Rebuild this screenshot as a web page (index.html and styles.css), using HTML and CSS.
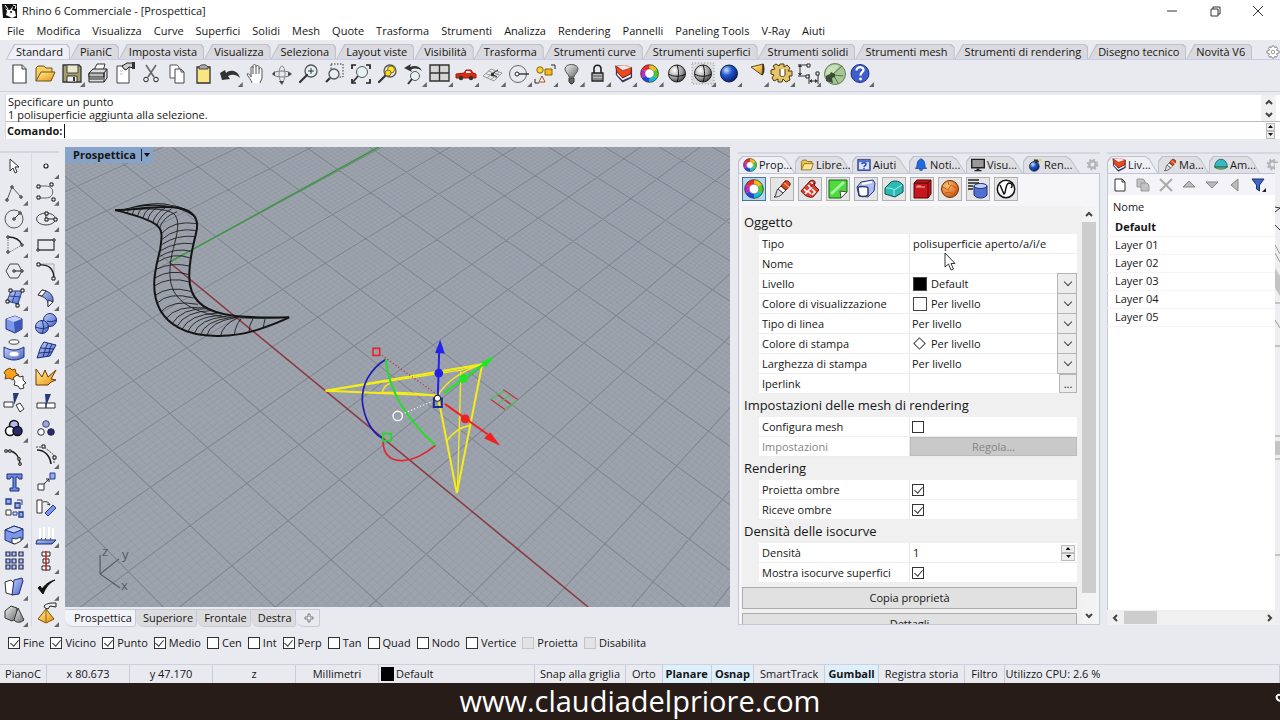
FILE: index.html
```html
<!DOCTYPE html>
<html lang="it">
<head>
<meta charset="utf-8">
<title>Rhino 6 Commerciale - [Prospettica]</title>
<link rel="stylesheet" href="styles.css">
</head>
<body>
<svg class="defs" aria-hidden="true">
  <defs>
    <linearGradient id="gBlue" x1="0" y1="0" x2="1" y2="1"><stop offset="0" stop-color="#c3d1f8"/><stop offset="1" stop-color="#4564c8"/></linearGradient>
    <linearGradient id="gGold" x1="0" y1="0" x2="1" y2="1"><stop offset="0" stop-color="#fff3a0"/><stop offset="1" stop-color="#e98f0c"/></linearGradient>
    <linearGradient id="gGrey" x1="0" y1="0" x2="1" y2="1"><stop offset="0" stop-color="#f4f4f4"/><stop offset="1" stop-color="#6a6a6a"/></linearGradient>
    <radialGradient id="gBall" cx=".35" cy=".3" r=".8"><stop offset="0" stop-color="#fff"/><stop offset=".6" stop-color="#999"/><stop offset="1" stop-color="#222"/></radialGradient>
    <radialGradient id="gBlueBall" cx=".35" cy=".3" r=".8"><stop offset="0" stop-color="#cfe4ff"/><stop offset=".4" stop-color="#2257cf"/><stop offset="1" stop-color="#04145c"/></radialGradient>
    <radialGradient id="gOrange" cx=".35" cy=".3" r=".8"><stop offset="0" stop-color="#ffc47a"/><stop offset="1" stop-color="#c84b00"/></radialGradient>
    <symbol id="wheel" viewBox="0 0 20 20">
      <g fill="none" stroke-width="4.500">
        <path d="M10 3A7 7 0 0 1 16.100 6.500" stroke="#f0c010"/><path d="M16.100 6.500A7 7 0 0 1 16.100 13.500" stroke="#4fd020"/>
        <path d="M16.100 13.500A7 7 0 0 1 10 17" stroke="#10c0c8"/><path d="M10 17A7 7 0 0 1 3.900 13.500" stroke="#2048e0"/>
        <path d="M3.900 13.500A7 7 0 0 1 3.900 6.500" stroke="#c028c8"/><path d="M3.900 6.500A7 7 0 0 1 10 3" stroke="#f02828"/>
      </g>
      <circle cx="10" cy="10" r="9.300" fill="none" stroke="#333" stroke-width=".8"/><circle cx="10" cy="10" r="4.800" fill="#fff" stroke="#555" stroke-width=".6"/>
    </symbol>
    <symbol id="layers" viewBox="0 0 20 20">
      <path d="M2 2v9l7 8 10-5V3z" fill="#1d2d6e" stroke="#222" stroke-width=".8"/><path d="M3 8l6 7 9-5v3l-9 4-6-6z" fill="#f6f6f6"/><path d="M1 1l8 5 10-3-1 7-9 4-6-6z" fill="#ee4a1d" stroke="#7b1a08" stroke-width=".8"/><path d="M2 1l9-1 8 3-10 3z" fill="#fbe6df" stroke="#a34" stroke-width=".5"/>
    </symbol>
    <symbol id="gear" viewBox="0 0 16 16">
      <circle cx="8" cy="8" r="6" fill="none" stroke="currentColor" stroke-width="2.500" stroke-dasharray="2.400 2.310"/><circle cx="8" cy="8" r="4" fill="none" stroke="currentColor" stroke-width="3"/>
    </symbol>
    <symbol id="brush" viewBox="0 0 20 20">
      <path d="M2 18c3-1 1-5 4-8l5 4c-3 4-6 4-9 4z" fill="#ddd" stroke="#333"/><path d="M6 10l3-3 5 4-3 3z" fill="#fff" stroke="#444"/><path d="M9 7l4-5c3-1 6 2 5 4l-4 5z" fill="#e2481b" stroke="#54190a"/><path d="M12 4l5 4" stroke="#ff9a78" stroke-width="1.500"/>
    </symbol>
    <symbol id="lens" viewBox="0 0 26 26">
      <circle cx="16" cy="10" r="6" fill="#e7f1f4" stroke="#555" stroke-width="1.300"/><path d="M12 14l-7 7" stroke="#333" stroke-width="2.200" stroke-linecap="round"/>
    </symbol>
  </defs>
</svg>

<header class="titlebar">
  <svg class="app-icon" viewBox="0 0 16 16"><path d="M0 1h15v14H1z" fill="#111"/><path d="M1 2l4 6-1 4 6 3 4-2-1-5-3-1 1-4-3 4-4-1z" fill="#fff"/><path d="M11 2l3 1-1 3M3 2l3 4" stroke="#fff" fill="none"/><circle cx="9" cy="9" r="1" fill="#111"/></svg>
  <h1>Rhino 6 Commerciale - [Prospettica]</h1>
  <div class="window-buttons">
    <button aria-label="Riduci a icona"><svg viewBox="0 0 12 12"><path d="M1 6h10"/></svg></button>
    <button aria-label="Ripristina"><svg viewBox="0 0 12 12"><path d="M2 4h7v7H2zM4 4V2h7v7H9"/></svg></button>
    <button aria-label="Chiudi"><svg viewBox="0 0 12 12"><path d="M1 1l10 10M11 1L1 11"/></svg></button>
  </div>
</header>

<nav class="menu">
  <button>File</button><button>Modifica</button><button>Visualizza</button><button>Curve</button><button>Superfici</button><button>Solidi</button><button>Mesh</button><button>Quote</button><button>Trasforma</button><button>Strumenti</button><button>Analizza</button><button>Rendering</button><button>Pannelli</button><button>Paneling Tools</button><button>V-Ray</button><button>Aiuti</button>
</nav>

<section class="ribbon">
  <div class="ribbon-tabs">
    <button class="tab on">Standard</button><button class="tab">PianiC</button><button class="tab">Imposta vista</button><button class="tab">Visualizza</button><button class="tab">Seleziona</button><button class="tab">Layout viste</button><button class="tab">Visibilità</button><button class="tab">Trasforma</button><button class="tab">Strumenti curve</button><button class="tab">Strumenti superfici</button><button class="tab">Strumenti solidi</button><button class="tab">Strumenti mesh</button><button class="tab">Strumenti di rendering</button><button class="tab">Disegno tecnico</button><button class="tab">Novità V6</button>
    <button class="ribbon-gear" aria-label="Opzioni"><svg viewBox="0 0 16 16"><path d="M7 1h2l1 2 2-1 1 2-1 2 3 1v2l-3 1 1 2-1 2-2-1-1 2H7l-1-2-2 1-1-2 1-2-3-1V7l3-1-1-2 1-2 2 1z" fill="#fff" stroke="#777"/><circle cx="8" cy="8" r="2" fill="none" stroke="#888"/></svg></button>
  </div>
  <div class="toolbar">
    <button aria-label="Nuovo"><svg viewBox="0 0 26 26"><path d="M7 4h9l4 4v14H7z" fill="#fff" stroke="#444" stroke-width="1.200"/><path d="M16 4v4h4" fill="#ddd" stroke="#444"/></svg></button>
    <button aria-label="Apri"><svg viewBox="0 0 26 26"><path d="M4 20V7l2-2h6l2 2h6v4" fill="#f5cf5f" stroke="#6a5417"/><path d="M4 20l5-9h14l-4 9z" fill="url(#gGold)" stroke="#6a5417"/></svg></button>
    <button class="fly" aria-label="Salva"><svg viewBox="0 0 26 26"><path d="M4 4h16l2 2v15H4z" fill="#a4a068" stroke="#333" stroke-width="1.300"/><path d="M8 4h11v8H8z" fill="#e9e7d0" stroke="#444"/><path d="M8 15h10v6H8z" fill="#eee" stroke="#333"/><path d="M14 16h2v4h-2z" fill="#333"/></svg></button>
    <button aria-label="Stampa"><svg viewBox="0 0 26 26"><path d="M9 9l3-6h8l-2 7" fill="#fff" stroke="#333"/><path d="M4 12l4-4h14v9l-3 4H4z" fill="#ddd" stroke="#222"/><path d="M4 12h15v4H4zM4 18h14" fill="#bbb" stroke="#222"/><path d="M19 12l3-4M19 21v-9" stroke="#222"/></svg></button>
    <button aria-label="Proprietà documento"><svg viewBox="0 0 26 26"><path d="M6 5h12v17H6z" fill="#fff" stroke="#444"/><path d="M9 10h3M9 13h3" stroke="#bbb"/><path d="M11 5l5-3h7v5l-5-1-3 3-2-1z" fill="#ccc" stroke="#222"/><path d="M21 1h3v7h-3z" fill="#333"/></svg></button>
    <button aria-label="Taglia"><svg viewBox="0 0 26 26"><path d="M8 4l8 12M18 4l-8 12" stroke="#666" stroke-width="1.600"/><circle cx="8" cy="18.500" r="2.300" fill="none" stroke="#222"/><circle cx="18" cy="18.500" r="2.300" fill="none" stroke="#222"/></svg></button>
    <button aria-label="Copia"><svg viewBox="0 0 26 26"><path d="M6 4h7l2 2v11H6z" fill="#fff" stroke="#555"/><path d="M11 8h6l3 3v11h-9z" fill="#fff" stroke="#444"/><path d="M17 8v3h3" fill="none" stroke="#444"/></svg></button>
    <button aria-label="Incolla"><svg viewBox="0 0 26 26"><path d="M7 6h13v16H7z" fill="#f9e682" stroke="#333" stroke-width="1.300"/><path d="M9 6c1-3 8-3 9 0v2H9z" fill="#aaa" stroke="#444"/></svg></button>
    <button class="fly" aria-label="Annulla"><svg viewBox="0 0 26 26"><path d="M3 12l5-3 1 3c4-4 12-3 14 5-4-4-8-4-12-2l2 3-8 1z" fill="#333"/></svg></button>
    <button aria-label="Panoramica"><svg viewBox="0 0 26 26"><path d="M9 22c-1-4-4-6-5-9 2-1 3 1 4 3V7c0-2 2-2 2 0V5c0-2 3-2 3 0v1c0-2 3-2 3 0v2c0-2 3-2 3 1v8l-2 5" fill="#fff" stroke="#555"/><path d="M10 7v6M13 6v7M16 8v5" stroke="#555"/></svg></button>
    <button aria-label="Ruota vista"><svg viewBox="0 0 26 26"><ellipse cx="13" cy="13" rx="9" ry="3" fill="none" stroke="#777"/><ellipse cx="13" cy="13" rx="3" ry="8" fill="none" stroke="#888"/><path d="M3 13l3-3v5zM13 24l-3-4h5zM23 13l-4-2v4z" fill="#444"/></svg></button>
    <button aria-label="Zoom dinamico"><svg viewBox="0 0 26 26"><use href="#lens"/><path d="M13 10h6M16 7v6" stroke="#333"/></svg></button>
    <button aria-label="Zoom finestra"><svg viewBox="0 0 26 26"><path d="M9 3h12v13H9z" fill="none" stroke="#333" stroke-dasharray="1.500 1.500"/><circle cx="12" cy="13" r="5" fill="#e7f1f4" stroke="#555" stroke-width="1.300"/><path d="M8 17l-4 4" stroke="#333" stroke-width="2.200"/></svg></button>
    <button aria-label="Zoom estensioni"><svg viewBox="0 0 26 26"><path d="M4 8V4h4M18 4h4v4M22 18v4h-4M8 22H4v-4" fill="none" stroke="#222" stroke-width="1.700"/><circle cx="14" cy="11" r="5.500" fill="#e7f1f4" stroke="#555"/><path d="M10 15l-5 6" stroke="#333" stroke-width="1.800"/></svg></button>
    <button aria-label="Zoom selezione"><svg viewBox="0 0 26 26"><use href="#lens"/><circle cx="17" cy="8.500" r="3.500" fill="#fae63a" stroke="#876e00"/><circle cx="14" cy="12" r="3" fill="#f8d828" stroke="#876e00"/></svg></button>
    <button class="fly" aria-label="Vista precedente"><svg viewBox="0 0 26 26"><path d="M3 7l7-4-1 3c5-2 10-1 12 4-4-3-8-3-11-1l1 2z" fill="#333"/><circle cx="14" cy="15" r="4.500" fill="#e7f1f4" stroke="#555"/><path d="M11 18l-4 5" stroke="#333" stroke-width="2"/></svg></button>
    <button class="fly" aria-label="Quattro viste"><svg viewBox="0 0 26 26"><path d="M3 4h19v16H3zM12.500 4v16M3 12h19" fill="#d6d6d6" stroke="#333" stroke-width="1.400"/></svg></button>
    <button class="fly" aria-label="Auto"><svg viewBox="0 0 26 26"><path d="M3 13l8-1 2-3h5l2 3 3 1v4H3z" fill="#d92a16" stroke="#a31a0c"/><path d="M13 10h4l1 2h-5z" fill="#eee"/><circle cx="8" cy="17" r="2.200" fill="#333"/><circle cx="18" cy="17" r="2.200" fill="#333"/></svg></button>
    <button class="fly" aria-label="Piano di costruzione"><svg viewBox="0 0 26 26"><path d="M3 15l8-7 11 4-8 8zM6 12.500l11 4.500M8.500 10l11 4M7 17l8-7M11 18.500l8-7" fill="none" stroke="#999"/><path d="M12 13l5 3M12 13l6-4" stroke="#333"/><path d="M11 12h3v3h-3z" fill="#333"/></svg></button>
    <button class="fly" aria-label="Cerchio"><svg viewBox="0 0 26 26"><circle cx="12" cy="13" r="8.500" fill="none" stroke="#666"/><circle cx="11" cy="13" r="2" fill="#fff" stroke="#222"/><path d="M13 13h10" stroke="#222" stroke-width="1.300"/></svg></button>
    <button class="fly" aria-label="Seleziona"><svg viewBox="0 0 26 26"><circle cx="8" cy="9" r="3.200" fill="#fbd42d" stroke="#80640b"/><path d="M13 8h7v6h-7z" fill="#fbb71a" stroke="#80640b"/><path d="M10 15l3 6H7z" fill="#fff" stroke="#a74813"/><path d="M19 4h4v4M3 18v4h4" fill="none" stroke="#222"/></svg></button>
    <button class="fly" aria-label="Visibilità"><svg viewBox="0 0 26 26"><path d="M10 16c0-3-4-4-4-8 0-6 13-6 13 0 0 4-4 5-4 8z" fill="url(#gGrey)" stroke="#555"/><path d="M10 17h5v4l-2 2h-1l-2-2z" fill="#666" stroke="#333"/></svg></button>
    <button class="fly" aria-label="Blocca"><svg viewBox="0 0 26 26"><path d="M9 12V8c0-5 7-5 7 0v4" fill="none" stroke="#222" stroke-width="1.600"/><path d="M7 12h11v8H7z" fill="#bbb" stroke="#222" stroke-width="1.300"/><path d="M8 15h9M8 18h9" stroke="#555"/></svg></button>
    <button class="fly" aria-label="Livelli"><svg viewBox="0 0 26 26"><use href="#layers" x="3" y="4" width="19" height="18"/></svg></button>
    <button class="fly" aria-label="Colori"><svg viewBox="0 0 26 26"><use href="#wheel" x="3" y="3" width="19" height="19"/></svg></button>
    <button aria-label="Ombreggia"><svg viewBox="0 0 26 26"><circle cx="13" cy="12.500" r="8.500" fill="url(#gBall)" stroke="#222"/><path d="M4.500 13c5 3 12 3 17 0M13 4c2 5 2 12 0 17" fill="none" stroke="#111"/></svg></button>
    <button class="fly" aria-label="Ombreggia selezione"><svg viewBox="0 0 26 26"><path d="M2 2h22v21H2z" fill="#dcdce0" stroke="#bbb" stroke-width="2" stroke-dasharray="1 2"/><circle cx="13" cy="12.500" r="8.500" fill="url(#gBall)" stroke="#222"/><path d="M4.500 13c5 3 12 3 17 0M13 4c2 5 2 12 0 17" fill="none" stroke="#111"/></svg></button>
    <button class="fly" aria-label="Rendering"><svg viewBox="0 0 26 26"><circle cx="13" cy="12.500" r="8.500" fill="url(#gBlueBall)" stroke="#0a1a50"/></svg></button>
    <button class="fly" aria-label="Faretto"><svg viewBox="0 0 26 26"><path d="M8 6l12-3-1 11z" fill="url(#gGold)" stroke="#5b471a"/><path d="M19 14c2-2 2-7 1-11" fill="none" stroke="#333" stroke-width="1.500"/></svg></button>
    <button class="fly" aria-label="Opzioni"><svg viewBox="0 0 26 26"><path d="M11 3h4v3l3-2 3 3-2 3h4v5h-3l1 4-4 2-3-3-1 3h-4v-3l-4 2-2-3 2-3-3-1v-4l4-1-2-3 3-2 3 2z" fill="#e6c46a" stroke="#4b3608"/><path d="M11 8v6c0 2 5 2 5 0V8" fill="#fff" stroke="#4b3608"/></svg></button>
    <button class="fly" aria-label="Quote"><svg viewBox="0 0 26 26"><path d="M3 4h10M3 15h8M5 6v8M13 4v2M14 13v10M23 13v10M15 20h7" fill="none" stroke="#333"/><path d="M3 6l2-3 2 3zM3 12l2 3 2-3zM17 18l-3 2 3 2zM20 18l3 2-3 2z" fill="#333"/><path d="M11 14h3v3h-3zM12 3h3v3h-3zM21 11h3v3h-3z" fill="#fff" stroke="#222"/></svg></button>
    <button aria-label="Grasshopper"><svg viewBox="0 0 26 26"><circle cx="13" cy="13" r="10.500" fill="#a5c893" stroke="#667a5e"/><path d="M5 8c3-4 8-5 12-3l-5 7-9 2z" fill="#c8e0b9"/><path d="M11 13l9-8M12 15l4 7M12 14l9 1" stroke="#53704a"/><path d="M4 15l4-2 1-2 4 2v3l-3 1 1 5-7-2z" fill="#3b4d36"/></svg></button>
    <button class="fly" aria-label="Aiuto"><svg viewBox="0 0 26 26"><circle cx="12" cy="12.500" r="9" fill="#3d5fc7" stroke="#1a2f86"/><path d="M8.500 9.500c0-5 8-4 7 0-1 2-3 2-3 5" fill="none" stroke="#fff" stroke-width="2.200"/><circle cx="12.500" cy="18" r="1.400" fill="#fff"/></svg></button>
  </div>
</section>

<section class="command">
  <div class="history">
    <div class="history-text"><p>Specificare un punto</p><p>1 polisuperficie aggiunta alla selezione.</p></div>
    <div class="mini-scroll"><svg viewBox="0 0 10 6"><path d="M2 5l3-3 3 3"/></svg><svg viewBox="0 0 10 6"><path d="M2 1l3 3 3-3"/></svg></div>
  </div>
  <div class="prompt">
    <label for="cmd">Comando:</label><i class="caret"></i><input id="cmd" type="text">
    <div class="spin"><button aria-label="Su"></button><button class="down" aria-label="Giù"></button></div>
  </div>
</section>

<main class="workspace">
  <aside class="tools">
    <button aria-label="Seleziona"><svg viewBox="0 0 26 26"><path d="M9 6v12l3-3 2 5 2-1-2-5h4z" fill="#fff" stroke="#333"/></svg></button>
    <button class="fly" aria-label="Punto"><svg viewBox="0 0 26 26"><circle cx="13" cy="13" r="2" fill="#fff" stroke="#222" stroke-width="1.200"/></svg></button>
    <button class="fly" aria-label="Polilinea"><svg viewBox="0 0 26 26"><path d="M6 21l5-13 9 10" fill="none" stroke="#555"/><g class="dot"><circle cx="6" cy="21" r="1.300"/><circle cx="11" cy="8" r="1.300"/><circle cx="20" cy="18" r="1.300"/></g></svg></button>
    <button class="fly" aria-label="Curva"><svg viewBox="0 0 26 26"><path d="M5 7h8c9 0 9 12 0 12H5" fill="none" stroke="#666"/><g class="sq"><path d="M4 6h3v3H4zM17 4h3v3h-3zM4 17h3v3H4zM19 19h3v3h-3z"/></g></svg></button>
    <button class="fly" aria-label="Cerchio"><svg viewBox="0 0 26 26"><circle cx="13" cy="13" r="9" fill="none" stroke="#555"/><path d="M13 13l6-6" stroke="#333"/><g class="dot"><circle cx="13" cy="13" r="1.300"/><circle cx="19" cy="7" r="1.300"/></g></svg></button>
    <button class="fly" aria-label="Ellisse"><svg viewBox="0 0 26 26"><ellipse cx="13" cy="13" rx="9.500" ry="6" fill="none" stroke="#444"/><path d="M13 13V7M13 13h9" stroke="#333"/><g class="sq"><path d="M12 12h3v3h-3zM12 6h3v3h-3zM21 12h3v3h-3z"/></g></svg></button>
    <button class="fly" aria-label="Arco"><svg viewBox="0 0 26 26"><path d="M7 5v16M7 21l14-8" stroke="#777" stroke-dasharray="1.500 1"/><path d="M7 5c7 0 12 3 14 8" fill="none" stroke="#222" stroke-width="1.300"/><g class="dot"><circle cx="7" cy="5" r="1.300"/><circle cx="7" cy="20" r="1.300"/><circle cx="21" cy="13" r="1.300"/></g></svg></button>
    <button class="fly" aria-label="Rettangolo"><svg viewBox="0 0 26 26"><path d="M5 8h16v10H5z" fill="none" stroke="#444" stroke-width="1.300"/><g class="dot"><circle cx="5" cy="18" r="1.300"/><circle cx="21" cy="8" r="1.300"/></g></svg></button>
    <button class="fly" aria-label="Poligono"><svg viewBox="0 0 26 26"><path d="M9 6h8l4 7-4 7H9l-4-7z" fill="none" stroke="#444"/><path d="M13 13h8" stroke="#222"/><g class="dot"><circle cx="13" cy="13" r="1.300"/><circle cx="21" cy="13" r="1.300"/></g></svg></button>
    <button class="fly" aria-label="Raccorda"><svg viewBox="0 0 26 26"><path d="M6 6h15v15" fill="none" stroke="#aaa"/><path d="M6 7c10-1 15 4 15 14" fill="none" stroke="#222" stroke-width="1.400"/><g class="sq"><path d="M4 5h3v3H4zM19 19h3v3h-3z"/></g></svg></button>
    <button class="fly" aria-label="Superficie"><svg viewBox="0 0 26 26"><path d="M10 6h11l-4 13-11-3z" fill="url(#gBlue)" stroke="#2b3f8a"/><path d="M8 11l12 1M15 6l-4 12" stroke="#2b3f8a"/><g class="sq"><path d="M8 4h3v3H8zM20 4h3v3h-3zM5 15h3v3H5zM15 19h3v3h-3z"/></g></svg></button>
    <button class="fly" aria-label="Loft"><svg viewBox="0 0 26 26"><path d="M9 5c8 1 12 6 11 12l-5 4c1-6-3-9-10-11z" fill="url(#gBlue)" stroke="#334"/><path d="M9 5l4 1-4 5-4-1zM15 15l5 2-5 5z" fill="#fff" stroke="#334"/></svg></button>
    <button class="fly" aria-label="Parallelepipedo"><svg viewBox="0 0 26 26"><path d="M5 8l9-3 7 3v10l-7 4-9-4z" fill="#7b97ea" stroke="#1c2f78"/><path d="M5 8l8 3 8-3-7-3z" fill="#c2d0fa"/><path d="M13 11l8-3v10l-7 4z" fill="#3e58b4"/></svg></button>
    <button class="fly" aria-label="Sfere"><svg viewBox="0 0 26 26"><circle cx="17" cy="9" r="6.500" fill="url(#gBlue)" stroke="#1c2f78"/><circle cx="9" cy="16" r="6.500" fill="url(#gBlue)" stroke="#1c2f78"/><path d="M3 16c4 2 9 2 12 0M9 10c2 4 2 8 0 12M14 10c3 1 6 1 9-1" fill="none" stroke="#1c2f78"/></svg></button>
    <button class="fly" aria-label="Curve da oggetti"><svg viewBox="0 0 26 26"><ellipse cx="13" cy="5" rx="5" ry="2.200" fill="#fff" stroke="#444"/><path d="M3 10c7 4 13 4 20 0v10c-7 4-13 4-20 0z" fill="url(#gBlue)" stroke="#1c2f78"/><ellipse cx="13" cy="17" rx="5" ry="2.500" fill="#fff" stroke="#aac"/></svg></button>
    <button class="fly" aria-label="Mesh"><svg viewBox="0 0 26 26"><path d="M11 5l12 3-6 11-13 2c2-5 3-12 7-16z" fill="url(#gBlue)" stroke="#1c2f78"/><path d="M8 11l13 1M6 16l13-1M15 6c-3 5-3 9-5 14M19 7c-3 5-2 8-5 13" fill="none" stroke="#1c2f78"/></svg></button>
    <button aria-label="Unisci"><svg viewBox="0 0 26 26"><path d="M5 6l4-2 2 2 3-1 1 4 3 2-2 3-2-1-2 3-4-2-4 1 1-4-2-2z" fill="#f9a11b" stroke="#70430a"/><path d="M12 14l4-3 3 2 3-1v4l3 3-3 2 1 3-4 1-2-3-4-1 1-3z" fill="#fff" stroke="#333"/></svg></button>
    <button aria-label="Esplodi"><svg viewBox="0 0 26 26"><path d="M3 21V5l6 8 3-7 3 7 8-7-5 9 5 1-5 2-3 3z" fill="url(#gGold)" stroke="#6e3802"/></svg></button>
    <button aria-label="Tronca"><svg viewBox="0 0 26 26"><path d="M3 12h9v5H3zM15 15l4-2 4 6-4 3z" fill="#fff" stroke="#333"/><path d="M12 3h6l-5 12z" fill="#263a7a"/></svg></button>
    <button aria-label="Suddividi"><svg viewBox="0 0 26 26"><path d="M4 13h9v5H4zM13 13h9v5h-9z" fill="#fff" stroke="#333"/><path d="M12 4h6l-5 12z" fill="#263a7a"/></svg></button>
    <button class="fly" aria-label="Raggruppa"><svg viewBox="0 0 26 26"><circle cx="13" cy="9" r="4.500" fill="#b7b8ee" stroke="#111" stroke-width="1.500"/><circle cx="9" cy="15" r="4.500" fill="#fff" stroke="#111" stroke-width="1.500"/><circle cx="16.500" cy="15" r="4.500" fill="#29296f" stroke="#111" stroke-width="1.500"/></svg></button>
    <button aria-label="Separa"><svg viewBox="0 0 26 26"><circle cx="13" cy="8" r="3.300" fill="#a3a3e4" stroke="#446"/><circle cx="8" cy="16" r="3.300" fill="#fff" stroke="#333"/><circle cx="18" cy="16" r="3.300" fill="#29296f" stroke="#224"/></svg></button>
    <button aria-label="Modifica punti"><svg viewBox="0 0 26 26"><path d="M5 8c8-1 13 4 14 13" fill="none" stroke="#222" stroke-width="1.500"/><g class="dot"><circle cx="5" cy="8" r="1.500"/><circle cx="9" cy="8" r="1.500"/><circle cx="18" cy="16" r="1.500"/><circle cx="19" cy="21" r="1.500"/></g></svg></button>
    <button class="fly" aria-label="Punti di controllo"><svg viewBox="0 0 26 26"><path d="M3 4h8l10 8v8" fill="none" stroke="#444" stroke-dasharray="2 1"/><path d="M4 7c8 0 13 6 14 14" fill="none" stroke="#222" stroke-width="1.700"/><g class="sq"><path d="M9 2h3v3H9zM20 13h3v3h-3z"/></g></svg></button>
    <button aria-label="Testo"><svg viewBox="0 0 26 26"><path d="M6 5h15v5h-3l-1-2h-2v11h3v3H9v-3h3V8h-2l-1 2H6z" fill="#6a88e4" stroke="#1e3172"/></svg></button>
    <button class="fly" aria-label="Sposta"><svg viewBox="0 0 26 26"><path d="M5 15h6v6H5z" fill="#fff" stroke="#333"/><path d="M17 4h5v6h-5z" fill="#93aaf2" stroke="#223a88"/><path d="M11 15l5-5M13 10h3v3" fill="none" stroke="#222"/></svg></button>
    <button aria-label="Copia"><svg viewBox="0 0 26 26"><path d="M5 4h5v5H5zM14 8h5v5h-5zM18 17h4v5h-4z" fill="#93aaf2" stroke="#223a88" stroke-width="1.300"/><path d="M5 15h5v5H5z" fill="#fff" stroke="#333"/><path d="M16 5h5v5M12 17h4v3h-4z" fill="none" stroke="#223a88"/></svg></button>
    <button aria-label="Ruota"><svg viewBox="0 0 26 26"><path d="M4 5h5v13H4z" fill="#fff" stroke="#333"/><path d="M12 18l8-8 3 3-8 8z" fill="#7b97ea" stroke="#223a88"/><path d="M10 7c3-1 6 0 7 3l-3-1" fill="none" stroke="#333"/></svg></button>
    <button class="fly" aria-label="Solidi"><svg viewBox="0 0 26 26"><path d="M4 8l9-4 9 3v10l-9 5-9-4z" fill="#7b97ea" stroke="#1c2f78"/><path d="M4 8l9 3 9-4-9-3z" fill="#c2d0fa" stroke="#1c2f78"/><path d="M11 16l4 1 5-2v4l-6 3-3-1z" fill="#fff" stroke="#333"/></svg></button>
    <button class="fly" aria-label="Estrudi"><svg viewBox="0 0 26 26"><path d="M4 18h19l-4 4H3z" fill="url(#gBlue)" stroke="#1c2f78"/><path d="M7 6v11M11 5v12M16 5v12M20 6v11" stroke="#fff" stroke-width="2"/><path d="M8 17h1M12 17h1M17 17h1" stroke="#555" stroke-width="2"/></svg></button>
    <button aria-label="Serie"><svg viewBox="0 0 26 26"><g fill="#b6c4f8" stroke="#222a55" stroke-width="1.200"><path d="M5 4h4v4H5zM11 4h4v4h-4zM18 4h4v4h-4zM5 11h4v4H5zM11 11h4v4h-4zM18 11h4v4h-4zM5 17h4v4H5zM11 17h4v4h-4zM18 17h4v4h-4z"/></g></svg></button>
    <button class="fly" aria-label="Allinea"><svg viewBox="0 0 26 26"><path d="M9 4h8v4H9zM10 11h6v4h-6zM9 18h8v4H9z" fill="#fff" stroke="#222"/><path d="M13 3v20" stroke="#d11f2c" stroke-width="1.600"/></svg></button>
    <button class="fly" aria-label="Piega"><svg viewBox="0 0 26 26"><path d="M4 8l6-2 3 3-1 12-7-2z" fill="#fff" stroke="#333"/><path d="M13 6l8-2 1 3-4 13-7 1z" fill="url(#gBlue)" stroke="#1c2f78"/></svg></button>
    <button class="fly" aria-label="Verifica"><svg viewBox="0 0 26 26"><path d="M5 14l5 6C13 13 16 9 22 6c-7 2-10 5-13 9l-2-3z" fill="#111" stroke="#111"/></svg></button>
    <button class="fly" aria-label="Forme"><svg viewBox="0 0 26 26"><path d="M4 10l6-5 6 2v10l-5 3-7-3z" fill="url(#gGrey)" stroke="#333"/><path d="M17 7l6 12c-3 3-8 3-10 0z" fill="url(#gGrey)" stroke="#333"/></svg></button>
    <button class="fly" aria-label="Gumball"><svg viewBox="0 0 26 26"><path d="M13 8l8 10-8 4-8-4z" fill="url(#gGold)" stroke="#7b5106"/><path d="M13 8v14" stroke="#9d6308"/><path d="M11 5c3-3 7-3 12-3v4l-6-1-2 3-3-1z" fill="#eee" stroke="#222"/></svg></button>
  </aside>

  <section class="viewport">
    <div class="scene">
      <svg class="scene-svg" viewBox="65 148 665 459" preserveAspectRatio="xMinYMin slice">
        <path id="minor" class="minor"/><path id="major" class="major"/>
        <path d="M169 263L587 607" stroke="#8d3a40" stroke-width="1.500"/>
        <path d="M169 263L378 148" stroke="#3a983f" stroke-width="1.500"/>
        <g transform="translate(100 190) scale(.33333)" fill="none" stroke="#151515">
          <path stroke-width="6" d="M45 63C110 62 180 46 235 56C282 66 293 88 290 118C285 150 266 200 267 265C268 320 300 360 370 374C420 385 490 386 566 384"/>
          <path stroke-width="6" d="M45 63C100 76 145 90 170 108C190 124 184 150 180 180C172 215 162 245 162 285C162 340 180 385 235 415C300 452 410 442 475 420C510 408 538 398 566 384"/>
          <path stroke-width="3" d="M95 55C130 44 180 40 210 48C250 54 278 68 287 92M75 60C150 40 240 45 285 84"/>
          <path stroke-width="2.500" d="M45 63C110 62 200 50 225 78C242 105 226 150 215 195C206 240 206 280 222 308C246 350 300 372 370 382C430 388 500 388 566 384"/>
          <path stroke-width="2.500" d="M80 73q5-8 4-11M96 77q4-12 8-18M112 81q4-15 14-25M128 87q3-18 22-31M143 93q3-21 27-38M158 101q6-27 37-45M170 109q8-31 44-50M178 118q9-34 52-50M184 133q34-40 104-30M186 150q40-36 102-26M185 166q44-30 99-24M182 184q46-28 97-20M178 202q46-28 94-16M172 218q48-30 97-12M168 240q48-22 98-10M164 266q46-28 102-10M162 290q45-30 106-12M165 318q40-30 106-12M170 342q36-36 110-16M181 368q34-38 112-23M197 388q33-42 115-32M215 404q29-49 107-46M230 412q23-47 110-49M245 420q22-45 108-49M263 428q17-46 101-50M281 434q14-45 97-53M300 438q12-43 92-54M319 440q9-43 86-55M360 441q7-35 50-54M402 436q3-28 20-48M446 427q0-20 12-39M488 416q3-15 6-28"/>
        </g>
        <g transform="translate(300 320) scale(.33333)" fill="none">
          <g stroke="#f5ee16" stroke-width="6">
            <path d="M75 214L544 134L468 520L411 228z"/><path d="M75 214L480 152L544 134M411 228C435 190 470 160 544 134" stroke-width="4"/><path d="M480 155L470 515M437 365Q465 325 508 317M244 218Q252 195 272 190M244 218Q330 218 411 228" stroke-width="4"/>
          </g>
          <path d="M255 120C205 150 183 200 185 245C190 295 212 338 245 356" stroke="#1c1cb6" stroke-width="5"/>
          <path d="M255 120C265 215 315 295 404 377" stroke="#26dd27" stroke-width="6"/>
          <path d="M247 366C248 405 270 424 305 423C345 420 377 400 404 377" stroke="#df2930" stroke-width="5"/>
          <path d="M244 108L402 220" stroke="#c8282d" stroke-width="4" stroke-dasharray="3 7"/><path d="M303 284L400 243" stroke="#fff" stroke-width="4" stroke-dasharray="3 7"/><path d="M268 344L395 260" stroke="#63b878" stroke-width="2" stroke-dasharray="4 6"/>
          <path d="M217 87h20v21h-20z" stroke="#e0282c" stroke-width="5"/><path d="M246 342h26v21h-26z" stroke="#21da25" stroke-width="5"/><circle cx="291" cy="289" r="14" stroke="#fff" stroke-width="4"/>
          <path d="M411 235L415 95" stroke="#2222ea" stroke-width="6"/><path d="M418 61L432 102L403 101z" fill="#2222ea"/><circle cx="414" cy="161" r="13" fill="#2222ea"/>
          <path d="M430 220L550 133" stroke="#20e524" stroke-width="7"/><path d="M581 110L555 144L540 128z" fill="#20e524"/><circle cx="488" cy="177" r="13" fill="#20e524"/>
          <path d="M432 253L560 344" stroke="#f12020" stroke-width="6"/><path d="M598 378L549 356L568 338z" fill="#f12020"/><circle cx="493" cy="298" r="13" fill="#f12020"/>
          <path d="M399 237h24v25h-24z" stroke="#1b2799" stroke-width="6"/><circle cx="410" cy="236" r="9" fill="#fff" stroke="#222" stroke-width="3"/>
          <path d="M569 239L612 270M588 224L630 255M607 210L650 240" stroke="#c93239" stroke-width="4"/><path d="M570 239L610 213M590 253L630 227M612 268L650 242" stroke="#3ecb42" stroke-width="3"/>
        </g>
        <path d="M100 555v19l20 14M100 574l19-15" fill="none" stroke="#555a63" stroke-width="1.200"/>
        <g class="axis"><text x="102" y="556">z</text><text x="122" y="559">y</text><text x="121" y="590">x</text></g>
      </svg>
      <button class="view-title"><span>Prospettica</span><i></i></button>
    </div>
    <div class="view-tabs"><button class="on">Prospettica</button><button>Superiore</button><button>Frontale</button><button>Destra</button><button class="add" aria-label="Nuova vista"><svg viewBox="0 0 10 10"><path d="M4 1h2v3h3v2H6v3H4V6H1V4h3z" fill="#fff" stroke="#777"/></svg></button></div>
  </section>

  <section class="panel props">
    <div class="panel-tabs">
      <button class="ptab on"><svg viewBox="0 0 20 20"><use href="#wheel"/></svg>Prop...</button>
      <button class="ptab"><svg viewBox="0 0 20 20"><path d="M2 17V5l2-2h5l2 2h6v3" fill="#f3c44a" stroke="#6a5417"/><path d="M2 17l4-9h13l-3 9z" fill="#ffe48c" stroke="#6a5417"/></svg>Libre...</button>
      <button class="ptab"><svg viewBox="0 0 20 20"><path d="M1 2h18v16H1z" fill="#5674cf" stroke="#233163"/><path d="M3 6h14v10H3z" fill="#dfe7ff"/><path d="M7 9c0-3 6-3 6 0 0 2-3 2-3 4m0 1v2" fill="none" stroke="#2a46ac" stroke-width="2"/></svg>Aiuti</button>
      <button class="ptab"><svg viewBox="0 0 20 20"><path d="M2 15c4-3 1-9 5-12l3-2 3 2c4 3 1 9 5 12z" fill="#1f6be0" stroke="#123c92"/><path d="M7 16c1 3 5 3 6 0z" fill="#123c92"/></svg>Noti...</button>
      <button class="ptab"><svg viewBox="0 0 20 20"><path d="M1 2h18v12H1z" fill="#999" stroke="#222" stroke-width="2"/><path d="M8 15h4v2h3v2H5v-2h3z" fill="#222"/></svg>Visu...</button>
      <button class="ptab"><svg viewBox="0 0 20 20"><circle cx="9" cy="12" r="7" fill="url(#gBlueBall)" stroke="#222"/><path d="M8 2h6l2 4-6 1z" fill="#333"/><path d="M15 2l4-1v5z" fill="#f5d043"/></svg>Ren...</button>
      <svg class="pgear" viewBox="0 0 16 16"><use href="#gear"/></svg>
    </div>
    <div class="panel-body">
      <div class="pages">
        <button class="on" aria-label="Oggetto"><svg viewBox="0 0 20 20"><use href="#wheel"/></svg></button>
        <button aria-label="Materiale"><svg viewBox="0 0 20 20"><use href="#brush"/></svg></button>
        <button aria-label="Texture"><svg viewBox="0 0 20 20"><path d="M1 12L10 2c3-2 6 0 5 3l-1 1 5 5-6 7c-5 1-9-2-12-6z" fill="#e23b30" stroke="#5a1a16"/><path d="M4 10l3 3-2 2M8 6l3 3-3 3 3 3M11 3l2 2M12 10l3 3-3 3" fill="none" stroke="#fff" stroke-width="1.700"/><path d="M11 8c1-3 3-4 4-3" fill="none" stroke="#5a1a16"/></svg></button>
        <button aria-label="Decal"><svg viewBox="0 0 20 20"><path d="M1 1h18v12l-6 6H1z" fill="#4fd93f" stroke="#1e6018"/><path d="M19 13l-7-1 1 7z" fill="#fff" stroke="#444"/><path d="M3 15L16 3" stroke="#a5f49a" stroke-width="3"/></svg></button>
        <button aria-label="Smussi"><svg viewBox="0 0 20 20"><path d="M1 8l4-5 12-2 2 3-1 8-6 6-9-1z" fill="#aebdf3" stroke="#2b3a80"/><path d="M2 9c0-2 9-2 10 0v7c-2 2-8 2-9 0z" fill="#fff" stroke="#2b3a80" stroke-width="1.500"/><path d="M6 5l10-2" stroke="#fff" stroke-width="2"/></svg></button>
        <button aria-label="Spessore"><svg viewBox="0 0 20 20"><path d="M1 9l6-6c4-2 9-1 12 3v7l-8 5-10-3z" fill="#2db9b4" stroke="#0d4d50"/><path d="M2 9c4 0 6 0 8 2l8-5M10 11v6" fill="none" stroke="#9ff3ee"/></svg></button>
        <button aria-label="Rilievo"><svg viewBox="0 0 20 20"><path d="M2 4l3-3h14v14l-3 4H2z" fill="#c5171c" stroke="#4f0708"/><path d="M2 4h14v15M16 4l3-3" fill="none" stroke="#4f0708"/><path d="M4 8h9M5 7h4" stroke="#f8b5b5"/></svg></button>
        <button aria-label="Displacement"><svg viewBox="0 0 20 20"><circle cx="10" cy="10" r="8.500" fill="url(#gOrange)" stroke="#6f2c04"/><path d="M3 8l5 3 3-5 5 3M5 14l5-1 4 3 2-4M8 3l1 3" fill="none" stroke="#b3530f" stroke-width=".8"/></svg></button>
        <button aria-label="Attributi"><svg viewBox="0 0 20 20"><path d="M6 7v9c2 4 11 4 13 0V7z" fill="#5270d0" stroke="#1a2c72"/><ellipse cx="12.500" cy="7" rx="6.500" ry="2.500" fill="#c4cff8" stroke="#1a2c72"/><path d="M0 1h11M0 4h11M0 7h5M0 10h5" stroke="#222" stroke-width="1.300"/></svg></button>
        <button aria-label="V-Ray"><svg viewBox="0 0 20 20"><circle cx="10" cy="10" r="8.700" fill="#fff" stroke="#111" stroke-width="1.500"/><path d="M4 6l4 9c2 0 1-10 5-11 3 0 4 3 2 5" fill="none" stroke="#111" stroke-width="1.500"/></svg></button>
      </div>
      <div class="prop-scroll">
        <form class="prop-list">
          <h2>Oggetto</h2>
          <div class="row"><label for="p1">Tipo</label><div class="val"><input id="p1" type="text" value="polisuperficie aperto/a/i/e" readonly></div></div>
          <div class="row"><label for="p2">Nome</label><div class="val"><input id="p2" type="text"></div></div>
          <div class="row"><label for="p3">Livello</label><div class="val drop"><i class="swatch black"></i><select id="p3"><option>Default</option></select></div></div>
          <div class="row"><label for="p4">Colore di visualizzazione</label><div class="val drop"><i class="swatch"></i><select id="p4"><option>Per livello</option></select></div></div>
          <div class="row"><label for="p5">Tipo di linea</label><div class="val drop"><select id="p5"><option>Per livello</option></select></div></div>
          <div class="row"><label for="p6">Colore di stampa</label><div class="val drop"><i class="swatch diamond"></i><select id="p6"><option>Per livello</option></select></div></div>
          <div class="row"><label for="p7">Larghezza di stampa</label><div class="val drop"><select id="p7"><option>Per livello</option></select></div></div>
          <div class="row"><label for="p8">Iperlink</label><div class="val"><input id="p8" type="text"><button type="button" class="more">...</button></div></div>
          <h2>Impostazioni delle mesh di rendering</h2>
          <div class="row"><label for="p9">Configura mesh</label><div class="val"><input id="p9" type="checkbox"></div></div>
          <div class="row off"><span>Impostazioni</span><div class="val"><button type="button" class="adjust" disabled>Regola...</button></div></div>
          <h2>Rendering</h2>
          <div class="row"><label for="p10">Proietta ombre</label><div class="val"><input id="p10" type="checkbox" checked></div></div>
          <div class="row"><label for="p11">Riceve ombre</label><div class="val"><input id="p11" type="checkbox" checked></div></div>
          <h2>Densità delle isocurve</h2>
          <div class="row"><label for="p12">Densità</label><div class="val"><input id="p12" type="text" value="1"><div class="spin wide"><button type="button" aria-label="Aumenta"></button><button type="button" class="down" aria-label="Riduci"></button></div></div></div>
          <div class="row"><label for="p13">Mostra isocurve superfici</label><div class="val"><input id="p13" type="checkbox" checked></div></div>
          <button type="button" class="wide-btn">Copia proprietà</button>
          <button type="button" class="wide-btn">Dettagli</button>
        </form>
        <div class="vscroll"><svg viewBox="0 0 10 6"><path d="M2 5l3-3 3 3"/></svg><div class="thumb"></div><svg viewBox="0 0 10 6"><path d="M2 1l3 3 3-3"/></svg></div>
      </div>
    </div>
    <svg class="cursor" viewBox="0 0 12 19"><path d="M1 1v14l3.500-3 2.500 6 2.500-1-2.500-5.500H11z" fill="#fff" stroke="#333"/></svg>
  </section>

  <section class="panel layers">
    <div class="panel-tabs">
      <button class="ptab on"><svg viewBox="0 0 20 20"><use href="#layers"/></svg>Liv...</button>
      <button class="ptab"><svg viewBox="0 0 20 20"><use href="#brush"/></svg>Ma...</button>
      <button class="ptab"><svg viewBox="0 0 20 20"><path d="M1 13c0-15 18-15 18 0z" fill="#38b8c0" stroke="#114b58"/><path d="M1 13c4 4 14 4 18 0z" fill="#78c850" stroke="#114b58"/></svg>Am...</button>
      <svg class="pgear" viewBox="0 0 16 16"><use href="#gear"/></svg>
    </div>
    <div class="layer-tools">
      <button aria-label="Nuovo livello"><svg viewBox="0 0 16 16"><path d="M3 2h7l3 3v9H3z" fill="#fff" stroke="#333"/><path d="M10 2v3h3" fill="none" stroke="#333"/></svg></button>
      <button aria-label="Nuovo sottolivello"><svg viewBox="0 0 16 16"><path d="M2 2h6l2 2v6H2z" fill="#c2c2c2" stroke="#999"/><path d="M6 6h6l2 2v6H6z" fill="#c2c2c2" stroke="#999"/></svg></button>
      <button aria-label="Elimina"><svg viewBox="0 0 16 16"><path d="M2 2l12 12M14 2L2 14" stroke="#aaa" stroke-width="2"/></svg></button>
      <button aria-label="Su"><svg viewBox="0 0 16 16"><path d="M8 4l6 6H2z" fill="#bbb" stroke="#888"/></svg></button>
      <button aria-label="Giù"><svg viewBox="0 0 16 16"><path d="M8 11l6-6H2z" fill="#bbb" stroke="#888"/></svg></button>
      <button aria-label="Indietro"><svg viewBox="0 0 16 16"><path d="M4 8l7-6v12z" fill="#bbb" stroke="#888"/></svg></button>
      <button aria-label="Filtro"><svg viewBox="0 0 16 16"><path d="M2 2h12L9.500 8v6l-3-2V8z" fill="#3f65c8" stroke="#1b2f75"/><path d="M16 11v4h-4z" fill="#222"/></svg></button>
    </div>
    <table class="layer-table">
      <thead><tr><th>Nome</th></tr></thead>
      <tbody><tr class="current"><td>Default</td></tr><tr><td>Layer 01</td></tr><tr><td>Layer 02</td></tr><tr><td>Layer 03</td></tr><tr><td>Layer 04</td></tr><tr><td>Layer 05</td></tr></tbody>
    </table>
    <div class="hscroll"><svg viewBox="0 0 6 10"><path d="M5 2L2 5l3 3"/></svg><div class="thumb"></div><svg viewBox="0 0 6 10"><path d="M1 2l3 3-3 3"/></svg></div>
    <svg class="edge" viewBox="0 0 5 460"><path d="M0 0h5v460H0z" fill="#eeeef0"/><path d="M0 44l5 1-5 4M0 62l5 5" fill="none" stroke="#333"/><path d="M0 82l5 9M0 90l5 9" stroke="#999"/><path d="M0 105l5 8v20l-5-8zM0 278h5v14H0z" fill="#c4c4c4"/><path d="M0 140h5M0 157l5 8M0 183h5M0 273h5M0 296h5M0 392h5" stroke="#999"/></svg>
  </section>
</main>

<section class="osnap">
  <label><input type="checkbox" checked>Fine</label><label><input type="checkbox" checked>Vicino</label><label><input type="checkbox" checked>Punto</label><label><input type="checkbox" checked>Medio</label><label><input type="checkbox">Cen</label><label><input type="checkbox">Int</label><label><input type="checkbox" checked>Perp</label><label><input type="checkbox">Tan</label><label><input type="checkbox">Quad</label><label><input type="checkbox">Nodo</label><label><input type="checkbox">Vertice</label><label><input type="checkbox" disabled>Proietta</label><label><input type="checkbox" disabled>Disabilita</label>
</section>

<footer class="status">
  <button class="w1">PianoC</button><span class="w2">x 80.673</span><span class="w2">y 47.170</span><span class="w2">z</span><button class="w2">Millimetri</button><button class="layer"><i></i>Default</button><button class="w3">Snap alla griglia</button><button>Orto</button><button class="on">Planare</button><button class="on">Osnap</button><button>SmartTrack</button><button class="on">Gumball</button><button>Registra storia</button><button>Filtro</button><span class="cpu">Utilizzo CPU: 2.6 %</span>
</footer>

<div class="banner"><p>www.claudiadelpriore.com</p><svg viewBox="0 0 5 14"><path d="M5 2c-4-1-5 4 0 6" fill="none" stroke="#fff" stroke-width="2"/></svg></div>
<script src="grid.js"></script>
</body>
</html>
```
FILE: grid.js
```js
// Projects the construction plane grid into the perspective view.
function project(u, v) {
  const w = 1 - 0.018 * u + 0.035 * v;
  const x = (29.3 * u + 54.2 * v + 169) / w;
  const y = (21.9 * u - 16.9 * v + 263) / w;
  return x.toFixed(1) + ' ' + y.toFixed(1);
}

const U = [-14, 21];
const V = [-11, 18];
const STEPS = 10;
let minor = '';
let major = '';

function add(i, path) {
  if (i % STEPS) minor += path;
  else major += path;
}

for (let i = U[0] * STEPS; i <= U[1] * STEPS; i++) {
  add(i, 'M' + project(i / STEPS, V[0]) + 'L' + project(i / STEPS, V[1]));
}
for (let i = V[0] * STEPS; i <= V[1] * STEPS; i++) {
  add(i, 'M' + project(U[0], i / STEPS) + 'L' + project(U[1], i / STEPS));
}

document.getElementById('minor').setAttribute('d', minor);
document.getElementById('major').setAttribute('d', major);
```
FILE: styles.css
```css
* { box-sizing: border-box; }
body {
  margin: 0;
  min-height: 100vh;
  display: flex;
  flex-direction: column;
  background: #e9eaf0;
  color: #161616;
  font: 11px/14px "Open Sans", "Noto Sans", sans-serif;
  overflow: hidden;
}
button, input, select { font: inherit; color: inherit; }
button { background: none; border: 0; padding: 0; }
h1, h2, p { margin: 0; font-weight: 400; }
svg { display: block; }
.defs { position: absolute; width: 0; height: 0; }

.titlebar { display: flex; align-items: center; height: 21px; background: #fff; padding-left: 2px; }
.titlebar h1 { font-size: 11px; margin-left: 4px; flex: 1; }
.app-icon { width: 16px; height: 16px; }
.window-buttons { display: flex; align-items: center; padding-right: 1px; }
.window-buttons button { width: 43px; display: flex; justify-content: center; }
.window-buttons svg { width: 12px; height: 12px; fill: none; stroke: #333; }

.menu { display: flex; height: 19px; background: #fff; padding-left: 1px; }
.menu button { padding: 0 6px; }

.ribbon { padding-top: 4px; padding-left: 6px; border-bottom: 1px solid #cdd0de; margin-bottom: 3px; }
.ribbon-tabs { display: flex; border-bottom: 1px solid #c5cce8; height: 16px; }
.tab, .ptab { position: relative; z-index: 0; white-space: nowrap; }
.tab { padding: 0 7px 0 10px; }
.tab::before, .tab::after, .ptab::before, .ptab::after { content: ""; position: absolute; z-index: -1; inset: 0; }
.tab::before, .ptab::before { background: #bfc2cd; }
.tab::after { background: #dadade; inset: 1px 1px 0; }
.tab::before, .tab::after { clip-path: polygon(0 100%, 8px 0, calc(100% - 3px) 0, 100% 3px, 100% 100%); }
.tab.on::after, .ptab.on::after { background: #eff0f6; }
.ribbon-gear { margin-left: auto; width: 14px; }
.ribbon-gear svg { width: 14px; height: 14px; }
.toolbar { display: grid; grid-template-columns: repeat(33, 1fr); max-width: 868px; padding: 1px 0 4px; }
.toolbar button, .tools button { position: relative; display: flex; align-items: center; justify-content: center; }
.toolbar svg, .tools svg { width: 26px; height: 26px; }
.fly::after { content: ""; position: absolute; right: 0; bottom: 0; width: 5px; height: 5px; background: #666; clip-path: polygon(100% 0, 100% 100%, 0 100%); }

.command { margin: 0 0 8px 5px; background: #fff; border-left: 1px solid #d7d9e4; }
.history { display: flex; border-bottom: 1px solid #bbb; height: 27px; }
.history-text { flex: 1; padding-left: 2px; line-height: 13px; }
.mini-scroll { width: 15px; margin-right: 4px; background: #f0f0f0; display: flex; flex-direction: column; justify-content: space-around; align-items: center; }
.mini-scroll svg, .vscroll svg { width: 10px; height: 6px; fill: none; stroke: #444; stroke-width: 2; }
.prompt { display: flex; align-items: center; height: 17px; padding-left: 1px; }
.prompt label { font-weight: 700; }
.caret { width: 1px; height: 14px; background: #111; margin-left: 2px; }
.prompt input { flex: 1; min-width: 0; border: 0; outline: 0; padding: 0; height: 15px; }
.spin { display: flex; flex-direction: column; width: 9px; margin-right: 5px; }
.spin button { height: 8px; background: #eee; border: 1px solid #bbb; display: flex; align-items: center; justify-content: center; }
.spin button::after { content: ""; width: 5px; height: 3px; background: #111; clip-path: polygon(50% 0, 100% 100%, 0 100%); }
.spin .down::after { transform: rotate(180deg); }

.workspace { flex: 1; min-height: 0; display: flex; }
.tools { width: 59px; margin-right: 3px; display: grid; grid-template-columns: 28px 1fr; column-gap: 3px; grid-template-rows: repeat(18, 1fr); margin-top: 4px; height: 476px; border-top: 2px solid #d3d5e0; }
.tools button { min-height: 0; }
.tools button:nth-child(even) { border-left: 1px solid #d8dae4; }
.dot { fill: #999; stroke: #222; stroke-width: .8; }
.sq { fill: #fff; stroke: #111; stroke-width: 1; }

.viewport { flex: 1; min-width: 0; display: flex; flex-direction: column; margin: 0 8px 0 3px; }
.scene { position: relative; flex: 1; min-height: 0; overflow: hidden; background: #9da3ad; }
.scene-svg { position: absolute; inset: 0; width: 100%; height: 100%; }
.minor { fill: none; stroke: #8f95a0; stroke-width: .5; }
.major { fill: none; stroke: #7f8590; stroke-width: 1; }
.axis { font-size: 13px; fill: #555a63; }
.view-title { position: absolute; left: 0; top: 0; height: 16px; padding: 0 3px 0 8px; background: #86a3ca; font-weight: 700; display: flex; align-items: center; }
.view-title i { border-left: 1px solid #223; height: 12px; margin-left: 5px; padding-left: 2px; display: flex; align-items: center; }
.view-title i::after { content: ""; border: 3px solid transparent; border-top: 4px solid #111; border-bottom: 0; }
.view-tabs { display: flex; height: 20px; padding-top: 2px; margin-bottom: 3px; }
.view-tabs button { height: 18px; padding: 0 3px 0 7px; background: #dcdcdf; border: 1px solid #c8cbd6; border-left: 0; border-radius: 0 0 3px 8px; }
.view-tabs .on { background: #f2f3f8; padding-left: 9px; }
.view-tabs .add { background: none; padding: 0 5px 0 8px; }
.add svg { width: 10px; height: 10px; }

.panel { position: relative; display: flex; flex-direction: column; border-top: 2px solid #d5d7e3; margin-top: 5px; height: 473px; }
.props { width: 362px; flex: none; margin-right: 7px; }
.layers { width: 173px; flex: none; overflow: hidden; }
.panel-tabs { display: flex; height: 20px; padding-top: 2px; border-bottom: 1px solid #bfc5dc; flex: none; }
.ptab { width: 57px; display: flex; align-items: center; gap: 2px; padding-left: 5px; }
.layers .ptab { width: 51px; }
.ptab svg { width: 14px; height: 14px; flex: none; }
.ptab::after { background: #dfdfe3; inset: 1px 1px 0; }
.ptab::before, .ptab::after { clip-path: polygon(0 5px, 4px 0, 76% 0, 84% 3px, 100% 100%, 0 100%); }
.pgear { width: 13px; height: 13px; color: #b4b4b8; margin: 2px 0 0 6px; flex: none; }
.panel-body { flex: 1; min-height: 0; display: flex; flex-direction: column; background: #f6f6f9; border: 1px solid #c5c8d6; border-top: 0; }
.pages { display: flex; gap: 4px; padding: 3px 3px 5px; }
.pages button { width: 24px; height: 24px; background: #e5e5e5; border: 1px solid #b0b0b0; display: flex; align-items: center; justify-content: center; }
.pages .on { background: #b9d6ef; border-color: #46749f; }
.pages svg { width: 20px; height: 20px; }
.prop-scroll { flex: 1; min-height: 0; display: flex; background: #f0f0f0; margin: 0 3px; overflow: hidden; }
.prop-list { flex: 1; min-width: 0; padding-top: 5px; }
.prop-list h2 { font-size: 13px; line-height: 23px; height: 23px; padding-left: 2px; }
.row { display: grid; grid-template-columns: 150px 1fr; height: 20px; margin-left: 17px; background: #fff; border-bottom: 1px solid #eee; align-items: center; }
.row > label, .row > span { padding-left: 3px; line-height: 19px; }
.row.off { color: #858585; }
.val { display: flex; align-items: center; height: 19px; border-left: 1px solid #e6e6e6; min-width: 0; }
.val input[type="text"] { flex: 1; min-width: 0; border: 0; padding: 0 0 0 3px; height: 18px; background: none; outline: 0; }
.val select { flex: 1; min-width: 0; appearance: none; border: 0; background: none; padding: 0 0 0 2px; height: 18px; outline: 0; }
.swatch { width: 14px; height: 14px; border: 1px solid #444; margin-left: 3px; }
.swatch.black { background: #000; }
.swatch.diamond { width: 9px; height: 9px; transform: rotate(45deg); margin: 0 3px 0 5px; }
.swatch + select { padding-left: 4px; }
.drop::after, .more { content: ""; width: 18px; height: 19px; background: #ececec; border: 1px solid #b5b5b5; flex: none; }
.drop { position: relative; }
.drop::before { content: ""; position: absolute; right: 6px; top: 5px; width: 5px; height: 5px; border: solid #444; border-width: 0 1px 1px 0; transform: rotate(45deg); }
input[type="checkbox"] { appearance: none; width: 12px; height: 12px; margin: 0; border: 1px solid #333; background: #fff; display: flex; align-items: center; justify-content: center; flex: none; }
input[type="checkbox"]:checked::before { content: ""; width: 4px; height: 7px; border: solid #333; border-width: 0 1px 1px 0; transform: rotate(40deg); margin-bottom: 2px; }
input[type="checkbox"]:disabled { border-color: #c4c4c4; background: #e3e3e5; }
.val input[type="checkbox"] { margin-left: 2px; }
.adjust { flex: 1; height: 19px; background: #c9c9c9; border: 1px solid #bbb; }
.spin.wide { width: 14px; margin-right: 2px; }
.wide-btn { display: block; width: 100%; height: 22px; margin-top: 4px; background: #e1e1e1; border: 1px solid #adadad; }
.vscroll { width: 14px; margin-left: 5px; display: flex; flex-direction: column; align-items: center; padding: 5px 0; gap: 5px; background: #f3f3f3; }
.vscroll .thumb { flex: 1; width: 14px; background: #cdcdcd; margin-bottom: 15px; }
.cursor { position: absolute; left: 206px; top: 98px; width: 12px; height: 19px; }

.layer-tools { display: flex; gap: 7px; height: 21px; align-items: center; padding-left: 4px; background: #f4f4f8; border-left: 1px solid #c5c8d6; flex: none; }
.layer-tools svg { width: 16px; height: 16px; }
.layer-table { border-collapse: collapse; width: 100%; background: #fff; border-left: 1px solid #c5c8d6; }
.layer-table th { font-weight: 400; text-align: left; height: 23px; padding: 0 0 0 5px; }
.layer-table td { height: 18px; padding: 0 0 0 7px; border-bottom: 1px solid #f4f4f4; }
.current { font-weight: 700; }
.layers::after { content: ""; order: 1; flex: 1; background: #fff; border-left: 1px solid #c5c8d6; }
.hscroll { order: 2; display: flex; align-items: center; gap: 6px; height: 15px; background: #f0f0f0; padding: 0 7px 0 5px; flex: none; }
.hscroll svg { width: 6px; height: 10px; fill: none; stroke: #444; stroke-width: 2; }
.hscroll svg:last-child { margin-left: auto; }
.hscroll .thumb { width: 33px; height: 13px; background: #cdcdcd; }
.edge { position: absolute; right: 0; top: 8px; width: 5px; height: 462px; }

.osnap { display: flex; align-items: center; gap: 6px; height: 25px; padding-left: 8px; margin-bottom: 9px; }
.osnap label { display: flex; align-items: center; gap: 3px; white-space: nowrap; }

.status { display: flex; height: 19px; border-top: 1px solid #cdd0de; }
.status > * { flex: none; border-right: 1px solid #c9ccda; padding: 0 6px; white-space: nowrap; display: flex; align-items: center; justify-content: center; }
.status .on { background: #def0fc; font-weight: 700; padding: 0 3px; }
.status .w1 { width: 47px; padding: 0; }
.status .w2 { width: 83px; }
.status .w3 { width: 91px; padding: 0; }
.status .layer { width: 156px; padding: 0 2px; justify-content: flex-start; gap: 2px; }
.status .layer i { width: 13px; height: 14px; background: #000; }
.status .cpu { flex: 1; padding: 0 1px; justify-content: flex-start; }

.banner { display: flex; align-items: center; justify-content: center; position: relative; height: 37px; background: #271c18; color: #fff; font-size: 29px; line-height: 32px; }
.banner p { padding-bottom: 2px; }
.banner svg { position: absolute; right: 0; top: 10px; width: 5px; height: 14px; }
```
